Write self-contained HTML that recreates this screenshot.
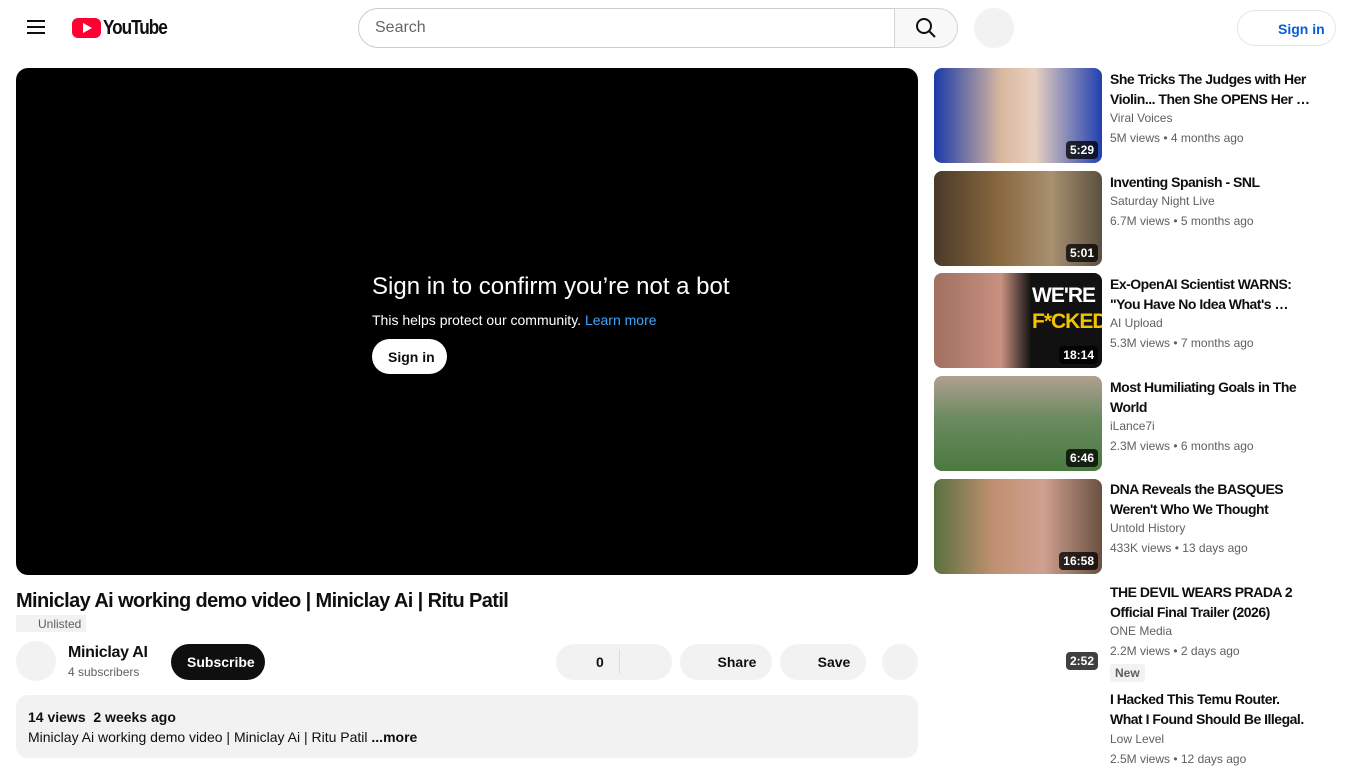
<!DOCTYPE html>
<html><head><meta charset="utf-8"><style>
*{margin:0;padding:0;box-sizing:border-box}
body{width:1352px;height:760px;overflow:hidden;background:#fff;font-family:"Liberation Sans",Arial,sans-serif;color:#0f0f0f;position:relative}
.a{position:absolute}
.thumb{position:absolute;left:934px;width:168px;height:95px;border-radius:8px;overflow:hidden}
.dur{position:absolute;right:4px;bottom:4px;background:rgba(0,0,0,.75);color:#fff;font-size:12px;font-weight:bold;padding:2px 4px;border-radius:4px}
.st{position:absolute;left:1110px;width:205px;font-size:14px;font-weight:bold;line-height:20px;letter-spacing:-.5px}
.sm{position:absolute;left:1110px;font-size:12px;color:#606060;line-height:20px}
.pill{position:absolute;background:#f2f2f2;border-radius:18px;height:36px;font-size:14px;font-weight:bold;display:flex;align-items:center;justify-content:center}
</style></head><body>
<div class="a" style="left:27px;top:20px;width:18px;height:2px;background:#0f0f0f;box-shadow:0 6px 0 #0f0f0f,0 12px 0 #0f0f0f"></div>
<div class="a" style="left:72px;top:18px;width:29px;height:20px;background:#f03;border-radius:6px"></div>
<div class="a" style="left:83px;top:23px;width:0;height:0;border-left:9px solid #fff;border-top:5px solid transparent;border-bottom:5px solid transparent"></div>
<div class="a" style="left:103px;top:17px;font-size:20px;font-weight:bold;letter-spacing:-1.2px;transform:scaleX(.86);transform-origin:left">YouTube</div>
<div class="a" style="left:358px;top:8px;width:537px;height:40px;border:1px solid #ccc;border-radius:20px 0 0 20px;font-size:16px;color:#666;padding:10px 16px">Search</div>
<div class="a" style="left:894px;top:8px;width:64px;height:40px;border:1px solid #d3d3d3;border-radius:0 20px 20px 0;background:#f8f8f8"></div>
<svg class="a" style="left:914px;top:16px" width="24" height="24" viewBox="0 0 24 24"><circle cx="10" cy="10" r="7" fill="none" stroke="#0f0f0f" stroke-width="2"/><path d="M15 15l6 6" stroke="#0f0f0f" stroke-width="2"/></svg>
<div class="a" style="left:974px;top:8px;width:40px;height:40px;border-radius:50%;background:#f2f2f2"></div>
<div class="a" style="left:1237px;top:10px;width:99px;height:36px;border:1px solid #e5e5e5;border-radius:18px;color:#065fd4;font-size:14px;font-weight:bold;padding:10px 0 0 40px">Sign in</div>
<div class="a" style="left:16px;top:68px;width:902px;height:507px;background:#000;border-radius:12px"></div>
<div class="a" style="left:372px;top:273px;color:#fff;font-size:24px">Sign in to confirm you’re not a bot</div>
<div class="a" style="left:372px;top:312px;color:#fff;font-size:14px">This helps protect our community. <span style="color:#3ea6ff">Learn more</span></div>
<div class="a" style="left:372px;top:339px;width:75px;height:35px;background:#fff;border-radius:18px;font-size:14px;font-weight:bold;padding:10px 0 0 16px">Sign in</div>
<div class="a" style="left:16px;top:590px;font-size:20px;font-weight:bold;letter-spacing:-.6px">Miniclay Ai working demo video | Miniclay Ai | Ritu Patil</div>
<div class="a" style="left:16px;top:615px;width:70px;height:17px;background:#f2f2f2;font-size:12px;color:#606060;padding:2px 0 0 22px">Unlisted</div>
<div class="a" style="left:16px;top:641px;width:40px;height:40px;border-radius:50%;background:#f2f2f2"></div>
<div class="a" style="left:68px;top:644px;font-size:16px;font-weight:bold;letter-spacing:-.3px">Miniclay AI</div>
<div class="a" style="left:68px;top:665px;font-size:12px;color:#606060">4 subscribers</div>
<div class="a" style="left:171px;top:644px;width:94px;height:36px;background:#0f0f0f;color:#fff;border-radius:18px;font-size:14px;font-weight:bold;padding:10px 0 0 16px">Subscribe</div>
<div class="pill" style="left:556px;top:644px;width:116px;justify-content:flex-start;padding-left:40px">0</div>
<div class="a" style="left:619px;top:650px;width:1px;height:24px;background:#ddd"></div>
<div class="pill" style="left:680px;top:644px;width:92px;padding-left:22px">Share</div>
<div class="pill" style="left:780px;top:644px;width:86px;padding-left:22px">Save</div>
<div class="pill" style="left:882px;top:644px;width:36px"></div>
<div class="a" style="left:16px;top:695px;width:902px;height:63px;background:#f2f2f2;border-radius:12px;padding:12px 12px;font-size:14px;line-height:20px">
<div style="font-weight:bold">14 views&nbsp; 2 weeks ago</div>
<div>Miniclay Ai working demo video | Miniclay Ai | Ritu Patil <b>...more</b></div></div>
<div class="thumb" style="top:68px;background:linear-gradient(90deg,#1a3aa8,#d9b8a0 40%,#e8d0c0 60%,#2040b0)"><div class="dur">5:29</div></div>
<div class="st" style="top:69px">She Tricks The Judges with Her Violin... Then She OPENS Her …</div>
<div class="sm" style="top:108px">Viral Voices</div><div class="sm" style="top:128px">5M views • 4 months ago</div>
<div class="thumb" style="top:171px;background:linear-gradient(90deg,#4a3a28,#8a6a40 40%,#a89070 70%,#5a5040)"><div class="dur">5:01</div></div>
<div class="st" style="top:172px">Inventing Spanish - SNL</div>
<div class="sm" style="top:191px">Saturday Night Live</div><div class="sm" style="top:211px">6.7M views • 5 months ago</div>
<div class="thumb" style="top:273px;background:linear-gradient(90deg,#a07060,#c89080 40%,#111 58%,#111)"><div class="a" style="left:98px;top:10px;color:#fff;font-size:21px;font-weight:bold;line-height:26px;letter-spacing:-1px">WE'RE<br><span style="color:#f5c400">F*CKED</span></div><div class="dur">18:14</div></div>
<div class="st" style="top:274px">Ex-OpenAI Scientist WARNS: "You Have No Idea What's …</div>
<div class="sm" style="top:313px">AI Upload</div><div class="sm" style="top:333px">5.3M views • 7 months ago</div>
<div class="thumb" style="top:376px;background:linear-gradient(180deg,#b0a090,#6a8a60 45%,#4a7a40)"><div class="dur">6:46</div></div>
<div class="st" style="top:377px">Most Humiliating Goals in The World</div>
<div class="sm" style="top:416px">iLance7i</div><div class="sm" style="top:436px">2.3M views • 6 months ago</div>
<div class="thumb" style="top:479px;background:linear-gradient(90deg,#5a7040,#c09070 35%,#d0a090 65%,#6a5040)"><div class="dur">16:58</div></div>
<div class="st" style="top:479px">DNA Reveals the BASQUES Weren't Who We Thought</div>
<div class="sm" style="top:518px">Untold History</div><div class="sm" style="top:538px">433K views • 13 days ago</div>
<div class="a" style="left:1066px;top:652px;background:rgba(0,0,0,.75);color:#fff;font-size:12px;font-weight:bold;padding:2px 4px;border-radius:4px">2:52</div>
<div class="st" style="top:582px">THE DEVIL WEARS PRADA 2 Official Final Trailer (2026)</div>
<div class="sm" style="top:621px">ONE Media</div><div class="sm" style="top:641px">2.2M views • 2 days ago</div>
<div class="a" style="left:1110px;top:664px;background:#f2f2f2;color:#606060;font-size:12px;font-weight:bold;padding:2px 5px;border-radius:3px">New</div>
<div class="st" style="top:689px">I Hacked This Temu Router. What I Found Should Be Illegal.</div>
<div class="sm" style="top:729px">Low Level</div><div class="sm" style="top:749px">2.5M views • 12 days ago</div>
</body></html>
